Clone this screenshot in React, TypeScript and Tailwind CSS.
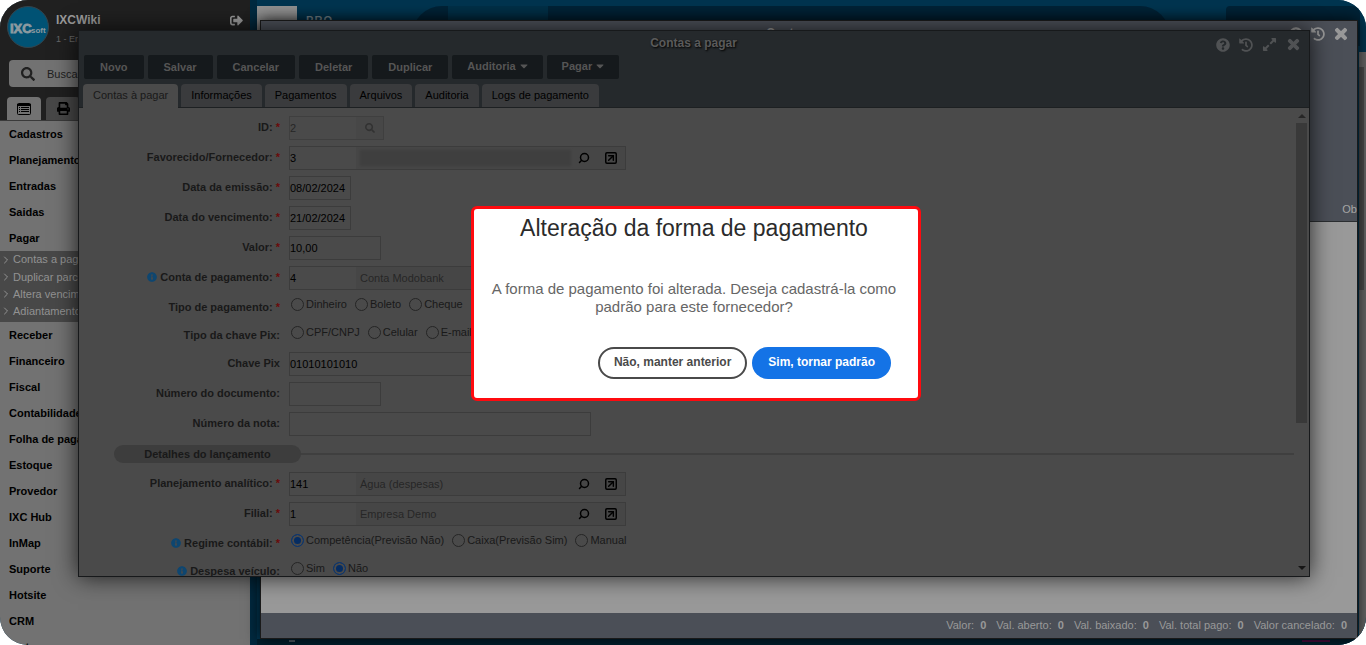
import { ReactNode } from "react";
import { FaCaretDown, FaExpandAlt, FaHistory, FaInfoCircle, FaPrint, FaQuestionCircle, FaSearch, FaSignOutAlt, FaTimes } from "react-icons/fa";
import { ChevronRight, Search, SquareArrowUpRight } from "lucide-react";

const menuTop = ["Cadastros", "Planejamento", "Entradas", "Saidas", "Pagar"];
const submenu = ["Contas a pagar", "Duplicar parcelas", "Altera vencimento", "Adiantamentos"];
const menuBottom = [
    "Receber", "Financeiro", "Fiscal", "Contabilidade", "Folha de pagamento", "Estoque",
    "Provedor", "IXC Hub", "InMap", "Suporte", "Hotsite", "CRM", "Sistema",
];

const actions = ["Novo", "Salvar", "Cancelar", "Deletar", "Duplicar"];
const dropdowns = ["Auditoria", "Pagar"];
const tabs = ["Contas à pagar", "Informações", "Pagamentos", "Arquivos", "Auditoria", "Logs de pagamento"];

const totals = ["Valor:", "Val. aberto:", "Val. baixado:", "Val. total pago:", "Valor cancelado:"];

function ListIcon() {
    return (
        <svg width="14" height="12" viewBox="0 0 14 12" aria-hidden="true">
            <rect x="0.5" y="0.5" width="13" height="11" rx="1" fill="none" stroke="#000" />
            <path d="M0 1h14v2H0zM2 4h1v1H2zM4 4h8v1H4zM2 6h1v1H2zM4 6h8v1H4zM2 8h1v1H2zM4 8h8v1H4z" fill="#000" />
        </svg>
    )
}

function MenuItem({ name }: { name: string }) {
    return (
        <li>
            <a href="#" className="block h-[26px] pl-[9px] leading-[26px] font-bold text-black">{name}</a>
        </li>
    )
}

function Sidebar() {
    return (
        <aside className="w-[250px] shrink-0 flex flex-col bg-[#727272] overflow-hidden whitespace-nowrap">
            <div className="shrink-0 bg-[#202020] border-b border-[#3a3a3a]">
                <div className="flex gap-[7px] h-[60px] pl-[7px] pt-[6px] pr-[7px]">
                    <svg width="42" height="42" viewBox="0 0 42 42" aria-label="IXC soft" className="shrink-0">
                        <circle cx="21" cy="21" r="20.5" fill="#005274" stroke="#35444c" />
                        <text x="3" y="27" fontSize="13" fontWeight="bold" fill="#8c9aa0" stroke="#8c9aa0" strokeWidth="0.8">IXC</text>
                        <text x="24" y="27" fontSize="8" fontWeight="bold" fill="#8c9aa0">soft</text>
                    </svg>
                    <div className="grow pt-1">
                        <div className="flex items-center justify-between h-5 text-[12px] font-bold text-[#999]">
                            IXCWiki
                            <button aria-label="Sair"><FaSignOutAlt size={13} /></button>
                        </div>
                        <p className="mt-[2px] text-[9px] leading-[14px] text-[#666]">1 - Empresa Demo</p>
                    </div>
                </div>
                <label className="flex items-center gap-3 h-[27px] mx-[9px] px-3 rounded bg-[#727272]">
                    <FaSearch size={14} className="shrink-0 text-[#202020]" />
                    <input type="text" placeholder="Buscar" aria-label="Buscar" className="w-full h-[27px] pt-px text-[11px] placeholder:text-[#202020] outline-none" />
                </label>
                <div className="flex gap-[5px] pt-[10px] pl-[7px]">
                    <button aria-label="Menu" className="w-[34px] h-[23px] grid place-items-center rounded-t bg-[#727272]"><ListIcon /></button>
                    <button aria-label="Imprimir" className="w-[34px] h-[23px] grid place-items-center rounded-t bg-[#474747]"><FaPrint size={13} /></button>
                </div>
            </div>
            <nav>
                <ul>{menuTop.map(name => <MenuItem key={name} name={name} />)}</ul>
                <ul className="h-[71px] pb-[2px] bg-[#484848] flex flex-col">
                    {submenu.map(name =>
                        <li key={name} className="grow flex items-center">
                            <a href="#" className="flex items-center gap-px text-[#929292]">
                                <ChevronRight size={12} />{name}
                            </a>
                        </li>
                    )}
                </ul>
                <ul>{menuBottom.map(name => <MenuItem key={name} name={name} />)}</ul>
            </nav>
        </aside>
    )
}

// page under the open windows, only its edges are visible
function Desktop() {
    return (
        <div className="grow flex overflow-hidden bg-[#003550]">
            <div className="w-[7px] bg-[#002a40]"></div>
            <div className="grow flex flex-col">
                <div className="flex h-[46px] pt-[6px]">
                    <div className="w-10 bg-[#929292]"></div>
                    <p className="w-[115px] pl-[9px] pt-2 text-[11px] leading-[13px] font-bold tracking-widest text-[#7a8a92]">PRO —</p>
                    <div className="w-9 rounded-tl-[30px] bg-[#002337]"></div>
                    <div className="w-[100px] bg-[#003048]"></div>
                    <div className="grow rounded-tr-[30px] bg-[#002337]"></div>
                    <div className="w-14"></div>
                    <div className="w-[134px] mr-[6px] rounded-tl rounded-tr-lg bg-[#002337]"></div>
                </div>
                <div className="grow flex justify-end items-stretch pt-[6px]">
                    <div className="w-[7px] bg-[#666]">
                        <div className="mt-[15px] h-[223px] w-[5px] bg-[#4a4a4a]"></div>
                    </div>
                </div>
                <div className="flex justify-between h-[6px] pl-8 pr-9 bg-[#00202f]">
                    <span className="h-[2px] mt-px w-[6px] bg-[#4e5d66]"></span>
                    <span className="h-[2px] mt-px w-[28px] bg-[#4b0a40]"></span>
                </div>
            </div>
        </div>
    )
}

function ListWindow() {
    return (
        <section className="absolute left-[260px] right-2 top-5 bottom-[6px] flex flex-col border border-[#1a1a1a] bg-[#999] shadow-[0_0_14px_rgba(0,0,0,0.8)]">
            <header className="h-[201px] shrink-0 flex flex-col justify-between bg-[#4b4f57] border-b border-[#2b2e31] text-[#999]">
                <div className="flex items-center h-[26px] pr-2">
                    <h2 className="grow pb-[2px] pl-[69px] text-center text-[12px] font-bold">Contas a pagar</h2>
                    <div className="flex items-center gap-2">
                        <FaQuestionCircle size={14} />
                        <FaHistory size={14} />
                        <FaTimes size={16} stroke="currentColor" strokeWidth={36} />
                    </div>
                </div>
                <div className="flex justify-end h-6 gap-8 leading-6 text-[#a5a5a5]">
                    <span>Forma.</span>
                    <span>Ob</span>
                </div>
            </header>
            <div className="grow"></div>
            <footer className="h-[25px] shrink-0 flex items-center justify-end gap-[10px] pr-[10px] bg-[#4b4f57] text-[#999]">
                {totals.map(name => <span key={name}>{name} <b className="pl-[3px]">0</b></span>)}
            </footer>
        </section>
    )
}

type RowProps = { label: string, htmlFor?: string, required?: boolean, info?: boolean, radio?: boolean, children: ReactNode }

function Row({ label, htmlFor, required, info, radio, children }: RowProps) {
    return (
        <div className={radio ? "shrink-0 flex gap-[9px] h-[22px]" : "shrink-0 flex gap-[9px] h-6"}>
            <label htmlFor={htmlFor} className="w-[201px] shrink-0 h-[22px] flex items-center justify-end gap-[3px] font-bold text-[#191919]">
                {info && <FaInfoCircle size={10} className="text-[#0e4670]" />}
                {label}
                {required && <span className="text-[#6b0a0a]">*</span>}
            </label>
            {children}
        </div>
    )
}

function TextField({ id, value, className }: { id: string, value?: string, className: string }) {
    return <input id={id} type="text" defaultValue={value} className={"h-6 border border-[#3c3c3c] text-black outline-none " + className} />
}

function Lookup({ id, value, text }: { id: string, value: string, text?: string }) {
    return (
        <div className="flex w-[337px] h-6 border border-[#3c3c3c] bg-[#464646]">
            <input id={id} type="text" defaultValue={value} className="w-[66px] shrink-0 bg-[#4a4a4a] text-black outline-none" />
            <div className="grow flex items-center pl-1 text-[#262626]">
                {text ?? <span className="grow h-4 bg-[#3f3f3f] blur-[1px]"></span>}
            </div>
            <button type="button" aria-label="Pesquisar" className="w-[26px] grid place-items-center text-black"><Search size={12} strokeWidth={3} className="-scale-x-100" /></button>
            <button type="button" aria-label="Abrir" className="w-7 grid place-items-center text-black"><SquareArrowUpRight size={14} strokeWidth={2.5} /></button>
        </div>
    )
}

function Radios({ name, options, checked }: { name: string, options: string[], checked?: string }) {
    return (
        <div className="flex items-center gap-2 h-4 pl-[2px] text-[#191919] whitespace-nowrap">
            {options.map(option =>
                <label key={option} className="flex items-center gap-[2px]">
                    <input
                        type="radio"
                        name={name}
                        defaultChecked={option === checked}
                        className="appearance-none size-[13px] rounded-full border border-[#252525] checked:border-[#0a3672] checked:bg-[#052c62] checked:shadow-[inset_0_0_0_2px_#4a4a4a]"
                    />
                    {option}
                </label>
            )}
        </div>
    )
}

function PaymentForm() {
    return (
        <form className="grow flex flex-col gap-[6px] pt-2 overflow-hidden">
            <Row label="ID:" htmlFor="id" required>
                <div className="flex w-[95px] h-6 border border-[#3f3f3f]">
                    <input id="id" type="text" defaultValue="2" className="w-[66px] text-[#262626] outline-none" />
                    <button type="button" aria-label="Pesquisar ID" className="grow grid place-items-center bg-[#474747] text-[#323232]"><FaSearch size={10} /></button>
                </div>
            </Row>
            <Row label="Favorecido/Fornecedor:" htmlFor="fornecedor" required><Lookup id="fornecedor" value="3" /></Row>
            <Row label="Data da emissão:" htmlFor="emissao" required><TextField id="emissao" value="08/02/2024" className="w-[62px]" /></Row>
            <Row label="Data do vencimento:" htmlFor="vencimento" required><TextField id="vencimento" value="21/02/2024" className="w-[62px]" /></Row>
            <Row label="Valor:" htmlFor="valor" required><TextField id="valor" value="10,00" className="w-[92px]" /></Row>
            <Row label="Conta de pagamento:" htmlFor="conta" required info><Lookup id="conta" value="4" text="Conta Modobank" /></Row>
            <Row label="Tipo de pagamento:" required radio><Radios name="tipo" options={["Dinheiro", "Boleto", "Cheque"]} /></Row>
            <Row label="Tipo da chave Pix:" radio><Radios name="pix" options={["CPF/CNPJ", "Celular", "E-mail"]} /></Row>
            <Row label="Chave Pix" htmlFor="chave"><TextField id="chave" value="01010101010" className="w-[302px]" /></Row>
            <Row label="Número do documento:" htmlFor="documento"><TextField id="documento" className="w-[92px]" /></Row>
            <Row label="Número da nota:" htmlFor="nota"><TextField id="nota" className="w-[302px]" /></Row>

            <div className="shrink-0 flex items-center h-6 pl-[35px]">
                <h3 className="w-[187px] h-[18px] leading-[18px] text-center font-bold rounded-full bg-[#3d3d3d] text-[#191919]">Detalhes do lançamento</h3>
                <hr className="grow border-0 h-[2px] bg-[#3f3f3f]" />
            </div>

            <Row label="Planejamento analítico:" htmlFor="planejamento" required><Lookup id="planejamento" value="141" text="Água (despesas)" /></Row>
            <Row label="Filial:" htmlFor="filial" required><Lookup id="filial" value="1" text="Empresa Demo" /></Row>
            <Row label="Regime contábil:" required info radio>
                <Radios name="regime" options={["Competência(Previsão Não)", "Caixa(Previsão Sim)", "Manual"]} checked="Competência(Previsão Não)" />
            </Row>
            <Row label="Despesa veículo:" info radio><Radios name="veiculo" options={["Sim", "Não"]} checked="Não" /></Row>
        </form>
    )
}

function FormWindow() {
    return (
        <section className="absolute left-[78px] right-14 top-[30px] bottom-[68px] flex flex-col border border-[#17191b] bg-[#4a4a4a] shadow-[0_0_22px_rgba(0,0,0,0.75)]">
            <header className="shrink-0 bg-[#25292c] border-b border-[#1d2022]">
                <div className="flex items-center h-6 pr-2 text-[#5a5a5a]">
                    <h2 className="grow pl-[92px] text-center text-[12px] font-bold [text-shadow:1px_1px_2px_#000]">Contas a pagar</h2>
                    <div className="flex items-center gap-[9px] pt-[3px] text-[#505254]">
                        <button aria-label="Ajuda"><FaQuestionCircle size={14} /></button>
                        <button aria-label="Histórico"><FaHistory size={14} /></button>
                        <button aria-label="Expandir"><FaExpandAlt size={15} /></button>
                        <button aria-label="Fechar"><FaTimes size={15} stroke="currentColor" strokeWidth={36} /></button>
                    </div>
                </div>
                <div className="flex gap-1 pl-[5px] font-bold text-[#555]">
                    {actions.map(name => <button key={name} className="h-6 px-4 rounded-xs bg-[#15191c]">{name}</button>)}
                    {dropdowns.map(name =>
                        <button key={name} className="flex items-center gap-[2px] h-6 pl-[15px] pr-[13px] pb-[2px] rounded-xs bg-[#15191c]">
                            {name}<FaCaretDown size={12} />
                        </button>
                    )}
                </div>
                <div className="flex items-start gap-[3px] h-7 pt-[5px] pl-1">
                    {tabs.map((name, index) =>
                        <button key={name} className={index === 0
                            ? "h-6 px-[10px] pb-[2px] rounded-t-sm bg-[#4a4a4a] text-[#191919]"
                            : "h-[23px] px-[10px] rounded-t-sm bg-[#3a3b3d] text-black"
                        }>{name}</button>
                    )}
                </div>
            </header>
            <div className="grow min-h-0 flex overflow-hidden">
                <PaymentForm />
                <div className="w-[15px] flex flex-col items-center py-[6px]">
                    <span className="border-x-4 border-b-4 border-x-transparent border-b-[#262626]"></span>
                    <div className="mt-[5px] w-[11px] h-[300px] bg-[#393939]"></div>
                    <span className="mt-auto border-x-4 border-t-4 border-x-transparent border-t-[#151515]"></span>
                </div>
            </div>
        </section>
    )
}

function ConfirmDialog() {
    return (
        <div className="absolute left-[78px] right-14 top-[30px] bottom-[68px] grid place-items-center pl-1">
            <div role="dialog" aria-labelledby="dialog-title" className="w-[450px] pl-3 pr-4 pb-[19px] rounded-md border-3 border-[#ff0a0f] bg-white text-center">
                <h1 id="dialog-title" className="text-[23px] leading-[38px] text-[#2b2b2b]">Alteração da forma de pagamento</h1>
                <p className="mt-[33px] text-[15px] leading-[18px] text-[#666]">
                    A forma de pagamento foi alterada. Deseja cadastrá-la como padrão para este fornecedor?
                </p>
                <div className="mt-[31px] flex justify-end gap-[5px] pr-[11px] text-[12px] font-bold">
                    <button className="h-8 px-[14px] pb-[2px] rounded-full border-2 border-[#4a4a4a] text-[#4a4a4a]">Não, manter anterior</button>
                    <button className="h-8 px-4 pb-[2px] rounded-full bg-[#1473e6] text-white">Sim, tornar padrão</button>
                </div>
            </div>
        </div>
    )
}

export default function App() {
    return (
        <main className="relative flex h-screen overflow-hidden rounded-[28px] bg-[#003550] font-['Liberation_Sans',Arial,sans-serif] text-[11px]">
            <Sidebar />
            <Desktop />
            <ListWindow />
            <FormWindow />
            <ConfirmDialog />
        </main>
    )
}
